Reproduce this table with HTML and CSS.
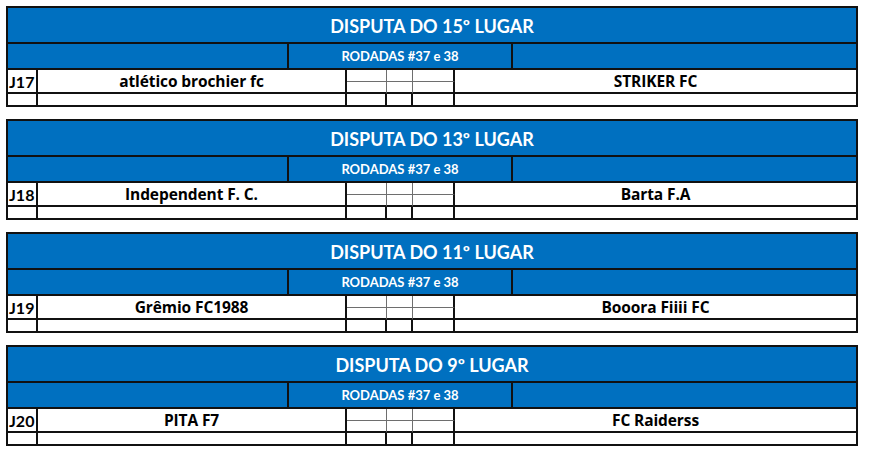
FILE: index.html
```html
<!DOCTYPE html>
<html>
<head>
<meta charset="utf-8">
<link rel="stylesheet" href="styles.css">
</head>
<body>
<div class="list">
  <div class="block">
    <div class="title">DISPUTA DO 15º LUGAR</div>
    <div class="sub sub-l"></div>
    <div class="sub sub-m">RODADAS #37 e 38</div>
    <div class="sub sub-r"></div>
    <div class="jid">J17</div>
    <div class="home">atlético brochier fc</div>
    <div class="sc c4 r3"></div><div class="sc c5 r3"></div><div class="sc c6 r3 last"></div>
    <div class="sc c4 r4 bot"></div><div class="sc c5 r4 bot"></div><div class="sc c6 r4 bot last"></div>
    <div class="away">STRIKER FC</div>
    <div class="sm"></div><div class="sm home-sm"></div><div class="sm"></div><div class="sm"></div><div class="sm"></div><div class="sm wide"></div>
  </div>
  <div class="block">
    <div class="title">DISPUTA DO 13º LUGAR</div>
    <div class="sub sub-l"></div>
    <div class="sub sub-m">RODADAS #37 e 38</div>
    <div class="sub sub-r"></div>
    <div class="jid">J18</div>
    <div class="home">Independent F. C.</div>
    <div class="sc c4 r3"></div><div class="sc c5 r3"></div><div class="sc c6 r3 last"></div>
    <div class="sc c4 r4 bot"></div><div class="sc c5 r4 bot"></div><div class="sc c6 r4 bot last"></div>
    <div class="away">Barta F.A</div>
    <div class="sm"></div><div class="sm home-sm"></div><div class="sm"></div><div class="sm"></div><div class="sm"></div><div class="sm wide"></div>
  </div>
  <div class="block">
    <div class="title">DISPUTA DO 11º LUGAR</div>
    <div class="sub sub-l"></div>
    <div class="sub sub-m">RODADAS #37 e 38</div>
    <div class="sub sub-r"></div>
    <div class="jid">J19</div>
    <div class="home">Grêmio FC1988</div>
    <div class="sc c4 r3"></div><div class="sc c5 r3"></div><div class="sc c6 r3 last"></div>
    <div class="sc c4 r4 bot"></div><div class="sc c5 r4 bot"></div><div class="sc c6 r4 bot last"></div>
    <div class="away">Booora Fiiii FC</div>
    <div class="sm"></div><div class="sm home-sm"></div><div class="sm"></div><div class="sm"></div><div class="sm"></div><div class="sm wide"></div>
  </div>
  <div class="block">
    <div class="title">DISPUTA DO 9º LUGAR</div>
    <div class="sub sub-l"></div>
    <div class="sub sub-m">RODADAS #37 e 38</div>
    <div class="sub sub-r"></div>
    <div class="jid">J20</div>
    <div class="home">PITA F7</div>
    <div class="sc c4 r3"></div><div class="sc c5 r3"></div><div class="sc c6 r3 last"></div>
    <div class="sc c4 r4 bot"></div><div class="sc c5 r4 bot"></div><div class="sc c6 r4 bot last"></div>
    <div class="away">FC Raiderss</div>
    <div class="sm"></div><div class="sm home-sm"></div><div class="sm"></div><div class="sm"></div><div class="sm"></div><div class="sm wide"></div>
  </div>
</div>
</body>
</html>
```
FILE: styles.css
```css
* { box-sizing: border-box; }
html, body { margin: 0; padding: 0; background: #fff; }
body { padding: 6px 0 0 6px; font-family: Lato, "Open Sans", sans-serif; }
.list { display: flex; flex-direction: column; gap: 12px; }
.block {
  display: grid;
  width: 852px;
  grid-template-columns: 30px 251px 58px 40px 26px 42px 58px 345px;
  grid-template-rows: 36px 26px 12px 12px 13px;
  border-top: 2px solid #111;
  border-left: 2px solid #111;
}
.block > div {
  border-right: 2px solid #111;
  border-bottom: 2px solid #111;
  display: flex;
  align-items: center;
  justify-content: center;
  font-weight: 700;
  color: #000;
  white-space: nowrap;
}
.block > .title {
  grid-column: 1 / -1;
  background: #0070c0;
  color: #fff;
  font-size: 18px;
  padding-top: 1px;
}
.block > .sub { background: #0070c0; color: #fff; font-size: 13px; }
.sub-l { grid-column: 1 / 3; }
.sub-m { grid-column: 3 / 8; }
.sub-r { grid-column: 8 / 9; }
.block > .home, .block > .away {
  font-family: "Open Sans", Lato, sans-serif;
  font-size: 15.5px;
  letter-spacing: -0.1px;
}
.block > .jid {
  grid-column: 1;
  grid-row: 3 / 5;
  justify-content: flex-start;
  padding-left: 1px;
  font-family: Lato, "Open Sans", sans-serif;
  font-size: 16px;
}
.home { grid-column: 2 / 4; grid-row: 3 / 5; }
.away { grid-column: 7 / 9; grid-row: 3 / 5; }
.block > .sc { border-right: 1px solid #6e6e6e; border-bottom: 1px solid #6e6e6e; }
.block > .sc.last { border-right: 2px solid #111; }
.block > .sc.bot { border-bottom: 2px solid #111; }
.c4 { grid-column: 4; }
.c5 { grid-column: 5; }
.c6 { grid-column: 6; }
.r3 { grid-row: 3; }
.r4 { grid-row: 4; }
.sm { grid-row: 5; }
.sm.home-sm { grid-column: 2 / 4; }
.sm.wide { grid-column: 7 / 9; }
```
